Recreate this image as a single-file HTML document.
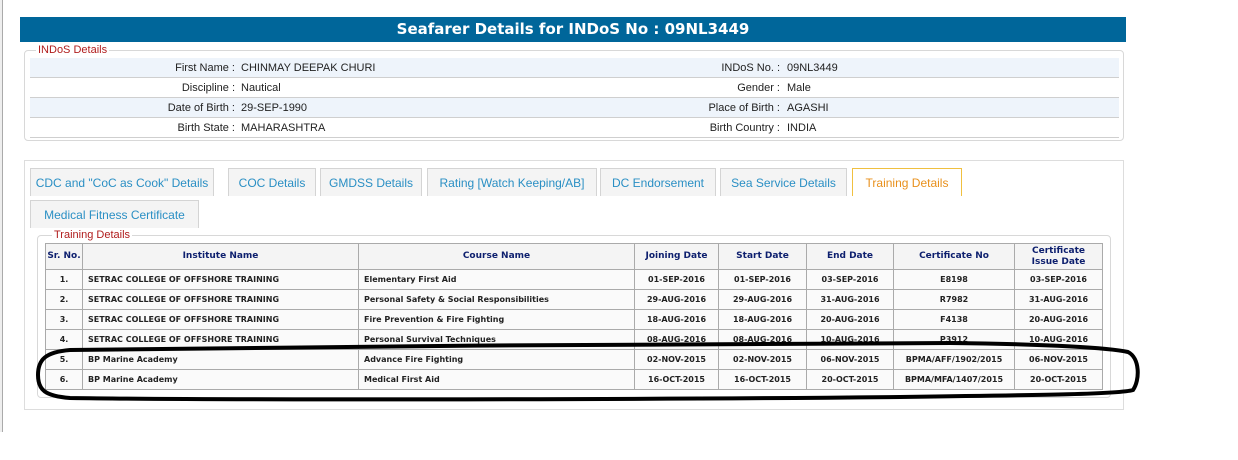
<!DOCTYPE html>
<html><head><style>
*{margin:0;padding:0;box-sizing:border-box}
body{width:1238px;height:460px;background:#fff;position:relative;font-family:"Liberation Sans",Arial,sans-serif;overflow:hidden}
.abs{position:absolute}
.hdr{left:20px;top:17px;width:1106px;height:25px;background:#00669a;color:#fff;font:bold 15px "DejaVu Sans",sans-serif;text-align:center;line-height:25px}
.fs{border:1px solid #d8d8d8;border-radius:4px}
.leg{background:#fff;color:#b01c1c;font-size:11px;padding:0 2px;line-height:12px}
.row{left:30px;width:1089px;height:20px;border-bottom:1px solid #cfcfcf;font-size:11px;line-height:20px;color:#222}
.row.alt{background:#eef4fb}
.row span{position:absolute;white-space:nowrap}
.l1{right:884px;text-align:right}.v1{left:211px}
.l2{right:339px;text-align:right}.v2{left:757px}
.tab{top:168px;height:28px;border:1px solid #d4d4d4;border-bottom:none;background:#f4f4f4;color:#2a8fc4;font-size:12px;text-align:center;line-height:28px;white-space:nowrap}
table{border-collapse:collapse;font:bold 8px "DejaVu Sans",Verdana,sans-serif;color:#222}
td,th{border:1px solid #aaa;height:20px;text-align:center;padding:0;white-space:nowrap}
th{color:#0d1f6e;background:#f4f4f4;height:26px;font-size:9px;line-height:11px}
td.l{text-align:left;padding-left:5px}
tbody tr td{background:#fafafa}
</style></head><body>
<div class="abs" style="left:0;top:0;width:3px;height:432px;border-right:1px solid #aaa;background:#eee"></div>
<div class="abs hdr">Seafarer Details for INDoS No : 09NL3449</div>
<div class="abs fs" style="left:24px;top:50px;width:1100px;height:91px"></div>
<div class="abs leg" style="left:36px;top:44px">INDoS Details</div>
<div class="abs row alt" style="top:58px"><span class="l1">First Name :</span><span class="v1">CHINMAY DEEPAK CHURI</span><span class="l2">INDoS No. :</span><span class="v2">09NL3449</span></div>
<div class="abs row" style="top:78px"><span class="l1">Discipline :</span><span class="v1">Nautical</span><span class="l2">Gender :</span><span class="v2">Male</span></div>
<div class="abs row alt" style="top:98px"><span class="l1">Date of Birth :</span><span class="v1">29-SEP-1990</span><span class="l2">Place of Birth :</span><span class="v2">AGASHI</span></div>
<div class="abs row" style="top:118px"><span class="l1">Birth State :</span><span class="v1">MAHARASHTRA</span><span class="l2">Birth Country :</span><span class="v2">INDIA</span></div>

<div class="abs" style="left:24px;top:160px;width:1100px;height:250px;border:1px solid #ddd"></div>
<div class="abs tab" style="left:30px;width:184px">CDC and "CoC as Cook" Details</div>
<div class="abs tab" style="left:228px;width:88px">COC Details</div>
<div class="abs tab" style="left:320px;width:102px">GMDSS Details</div>
<div class="abs tab" style="left:427px;width:170px">Rating [Watch Keeping/AB]</div>
<div class="abs tab" style="left:600px;width:116px">DC Endorsement</div>
<div class="abs tab" style="left:720px;width:127px">Sea Service Details</div>
<div class="abs tab" style="left:852px;width:110px;background:#fff;border-color:#f0c040;color:#e8901c">Training Details</div>
<div class="abs tab" style="left:30px;top:200px;width:169px">Medical Fitness Certificate</div>

<div class="abs fs" style="left:37px;top:235px;width:1074px;height:163px"></div>
<div class="abs leg" style="left:52px;top:229px">Training Details</div>
<table class="abs" style="left:45px;top:243px;width:1058px">
<colgroup><col style="width:37px"><col style="width:276px"><col style="width:276px"><col style="width:84px"><col style="width:88px"><col style="width:87px"><col style="width:121px"><col style="width:88px"></colgroup>
<thead><tr><th>Sr. No.</th><th>Institute Name</th><th>Course Name</th><th>Joining Date</th><th>Start Date</th><th>End Date</th><th>Certificate No</th><th>Certificate<br>Issue Date</th></tr></thead>
<tbody>
<tr><td>1.</td><td class="l">SETRAC COLLEGE OF OFFSHORE TRAINING</td><td class="l">Elementary First Aid</td><td>01-SEP-2016</td><td>01-SEP-2016</td><td>03-SEP-2016</td><td>E8198</td><td>03-SEP-2016</td></tr>
<tr><td>2.</td><td class="l">SETRAC COLLEGE OF OFFSHORE TRAINING</td><td class="l">Personal Safety &amp; Social Responsibilities</td><td>29-AUG-2016</td><td>29-AUG-2016</td><td>31-AUG-2016</td><td>R7982</td><td>31-AUG-2016</td></tr>
<tr><td>3.</td><td class="l">SETRAC COLLEGE OF OFFSHORE TRAINING</td><td class="l">Fire Prevention &amp; Fire Fighting</td><td>18-AUG-2016</td><td>18-AUG-2016</td><td>20-AUG-2016</td><td>F4138</td><td>20-AUG-2016</td></tr>
<tr><td>4.</td><td class="l">SETRAC COLLEGE OF OFFSHORE TRAINING</td><td class="l">Personal Survival Techniques</td><td>08-AUG-2016</td><td>08-AUG-2016</td><td>10-AUG-2016</td><td>P3912</td><td>10-AUG-2016</td></tr>
<tr><td>5.</td><td class="l">BP Marine Academy</td><td class="l">Advance Fire Fighting</td><td>02-NOV-2015</td><td>02-NOV-2015</td><td>06-NOV-2015</td><td>BPMA/AFF/1902/2015</td><td>06-NOV-2015</td></tr>
<tr><td>6.</td><td class="l">BP Marine Academy</td><td class="l">Medical First Aid</td><td>16-OCT-2015</td><td>16-OCT-2015</td><td>20-OCT-2015</td><td>BPMA/MFA/1407/2015</td><td>20-OCT-2015</td></tr>
</tbody></table>
<svg class="abs" style="left:0;top:0" width="1238" height="460">
<path d="M70 350 C300 347 800 342 950 343 C1050 344 1110 348 1128 352 C1140 358 1140 380 1133 390 C1120 394 1050 395 900 397 C600 400 200 400 70 398 C45 396 38 390 38 375 C38 360 45 352 70 350 Z" fill="none" stroke="#000" stroke-width="4"/>
</svg>
</body></html>
